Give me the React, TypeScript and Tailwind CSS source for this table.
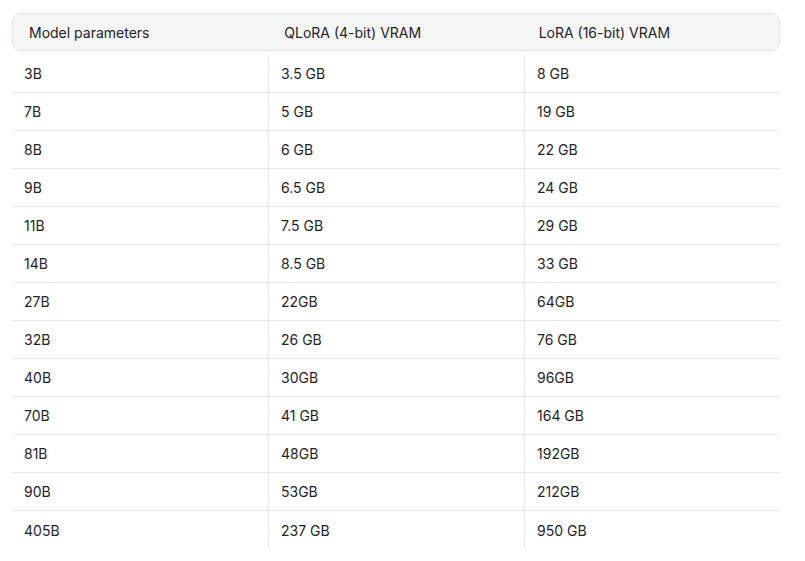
const rows: [string, string, string][] = [
  ['3B', '3.5 GB', '8 GB'],
  ['7B', '5 GB', '19 GB'],
  ['8B', '6 GB', '22 GB'],
  ['9B', '6.5 GB', '24 GB'],
  ['11B', '7.5 GB', '29 GB'],
  ['14B', '8.5 GB', '33 GB'],
  ['27B', '22GB', '64GB'],
  ['32B', '26 GB', '76 GB'],
  ['40B', '30GB', '96GB'],
  ['70B', '41 GB', '164 GB'],
  ['81B', '48GB', '192GB'],
  ['90B', '53GB', '212GB'],
  ['405B', '237 GB', '950 GB'],
];

export default function App() {
  return (
    <div
      className="w-[805px] h-[561px] bg-white pl-3 pt-[13px] text-[14px] text-[#1f2328]"
      style={{ fontFamily: 'Inter, "Noto Sans", sans-serif' }}
    >
      <div className="w-[768px]">
        <div className="grid grid-cols-3 h-[38px] items-center rounded-lg border border-[#e6e8e8] bg-[#f5f6f6]">
          <div className="pl-[16px]">Model parameters</div>
          <div className="pl-[16px]">QLoRA (4-bit) VRAM</div>
          <div className="pl-[15px]">LoRA (16-bit) VRAM</div>
        </div>
        <div className="mt-[4px]">
          {rows.map((r, i) => (
            <div
              key={r[0]}
              className={`grid grid-cols-3 h-[38px] ${i < rows.length - 1 ? 'border-b border-[#e6e8e8]' : ''}`}
            >
              <div className="flex items-center pl-[12px]">{r[0]}</div>
              <div className="flex items-center pl-[12px] border-l border-[#e6e8e8]">{r[1]}</div>
              <div className="flex items-center pl-[12px] border-l border-[#e6e8e8]">{r[2]}</div>
            </div>
          ))}
        </div>
      </div>
    </div>
  );
}
